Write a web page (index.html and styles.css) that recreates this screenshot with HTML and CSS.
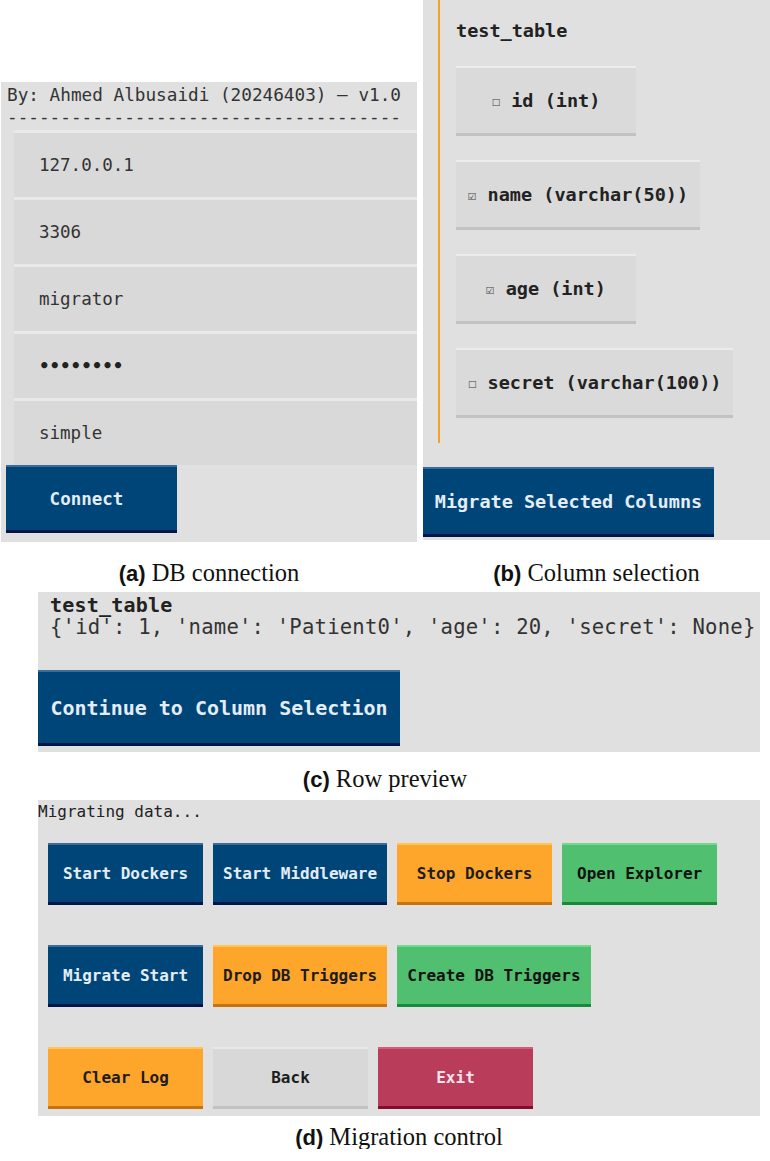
FILE: index.html
```html
<!DOCTYPE html>
<html>
<head>
    <title>DB Migrator</title>
    <meta charset="UTF-8">
    <meta name="viewport" content="width=device-width, initial-scale=1.0">
    <link rel="stylesheet" href="styles.css">
</head>
<body>
    <div class="row-top">
        <section class="panel panel-conn">
            <div class="byline">By: Ahmed Albusaidi (20246403) – v1.0</div>
            <div class="byline">-------------------------------------</div>
            <div class="fields">
                <div class="field">127.0.0.1</div>
                <div class="field">3306</div>
                <div class="field">migrator</div>
                <div class="field dots">••••••••</div>
                <div class="field">simple</div>
            </div>
            <button class="btn btn-blue btn-connect">Connect</button>
        </section>

        <section class="panel panel-cols">
            <div class="col-list">
                <div class="table-name">test_table</div>
                <button class="col-btn"><span class="box">☐</span> id (int)</button>
                <button class="col-btn"><span class="box">☑</span> name (varchar(50))</button>
                <button class="col-btn"><span class="box">☑</span> age (int)</button>
                <button class="col-btn"><span class="box">☐</span> secret (varchar(100))</button>
            </div>
            <button class="btn btn-blue btn-migrate">Migrate Selected Columns</button>
        </section>
    </div>

    <div class="row-captions">
        <div class="caption cap-a"><span class="tag">(a)</span> DB connection</div>
        <div class="caption cap-b"><span class="tag">(b)</span> Column selection</div>
    </div>

    <section class="panel panel-preview">
        <div class="preview-title">test_table</div>
        <div class="preview-row">{'id': 1, 'name': 'Patient0', 'age': 20, 'secret': None}</div>
        <button class="btn btn-blue btn-continue">Continue to Column Selection</button>
    </section>
    <div class="caption cap-wide cap-c"><span class="tag">(c)</span> Row preview</div>

    <section class="panel panel-control">
        <div class="log-line">Migrating data...</div>
        <div class="btn-row">
            <button class="btn btn-blue btn-ctl">Start Dockers</button>
            <button class="btn btn-blue btn-ctl">Start Middleware</button>
            <button class="btn btn-orange btn-ctl">Stop Dockers</button>
            <button class="btn btn-green btn-ctl">Open Explorer</button>
        </div>
        <div class="btn-row">
            <button class="btn btn-blue btn-ctl">Migrate Start</button>
            <button class="btn btn-orange btn-ctl">Drop DB Triggers</button>
            <button class="btn btn-green btn-ctl">Create DB Triggers</button>
        </div>
        <div class="btn-row">
            <button class="btn btn-orange btn-ctl">Clear Log</button>
            <button class="btn btn-grey btn-ctl">Back</button>
            <button class="btn btn-red btn-ctl">Exit</button>
        </div>
    </section>
    <div class="caption cap-wide cap-last"><span class="tag">(d)</span> Migration control</div>
</body>
</html>
```

FILE: styles.css
```css
body {
    margin: 0;
    background: #ffffff;
    font-family: "DejaVu Sans Mono", monospace;
    color: #333333;
}
.panel {
    background: #e0e0e0;
    box-sizing: border-box;
}
.row-top {
    display: flex;
    align-items: flex-start;
    height: 542px;
}

/* (a) connection */
.panel-conn {
    margin-top: 82px;
    margin-left: 1px;
    width: 416px;
    height: 460px;
    padding-top: 2px;
}
.byline {
    font-size: 17.7px;
    line-height: 22px;
    padding-left: 6px;
    white-space: pre;
}
.fields {
    margin-top: 2px;
    margin-left: 13px;
}
.field {
    box-sizing: border-box;
    height: 67px;
    border-top: 3px solid #e9e9e9;
    background: #d9d9d9;
    padding-left: 25px;
    font-size: 17.5px;
    line-height: 64px;
}
.field.dots {
    font-weight: bold;
    color: #222222;
}
.btn {
    display: flex;
    align-items: center;
    justify-content: center;
    box-sizing: border-box;
    border: none;
    font-family: "DejaVu Sans Mono", monospace;
    font-weight: bold;
    padding: 0;
    cursor: pointer;
}
.btn-blue {
    background: #004578;
    color: #e4edf6;
    border-top: 2px solid #3b6c9c;
    border-bottom: 3px solid #00164a;
}
.btn-orange {
    background: #fea52c;
    color: #1c1c1c;
    border-top: 2px solid #ffc451;
    border-bottom: 3px solid #c6720f;
}
.btn-green {
    background: #50bf70;
    color: #121212;
    border-top: 2px solid #70d98c;
    border-bottom: 3px solid #188a3b;
}
.btn-grey {
    background: #d8d8d8;
    color: #1c1c1c;
    border-top: 2px solid #e8e8e8;
    border-bottom: 3px solid #c2c2c2;
}
.btn-red {
    background: #b93c5a;
    color: #f6e4ec;
    border-top: 2px solid #d75c7a;
    border-bottom: 3px solid #8a0a2f;
}
.btn-connect {
    margin-left: 5px;
    width: 171px;
    height: 68px;
    padding-right: 10px;
    font-size: 17.5px;
}

/* (b) columns */
.panel-cols {
    margin-left: 6px;
    width: 347px;
    height: 540px;
}
.col-list {
    margin-left: 15px;
    height: 443px;
    border-left: 2px solid #f5a324;
    box-sizing: border-box;
    padding: 19px 0 0 16px;
    display: flex;
    flex-direction: column;
    align-items: flex-start;
    gap: 24px;
}
.table-name {
    font-size: 18.5px;
    font-weight: bold;
    line-height: 23px;
    color: #222222;
}
.col-btn {
    box-sizing: border-box;
    min-width: 180px;
    height: 70px;
    padding: 0 12px;
    border: none;
    border-top: 2px solid #ececec;
    border-bottom: 3px solid #c2c2c2;
    background: #dadada;
    font-family: "DejaVu Sans Mono", monospace;
    font-size: 18.5px;
    font-weight: bold;
    color: #222222;
    text-align: center;
}
.box {
    font-size: 14px;
    font-weight: normal;
    color: #444444;
    vertical-align: 1px;
}
.btn-migrate {
    margin-top: 24px;
    width: 291px;
    height: 70px;
    font-size: 18.5px;
}

/* captions */
.row-captions {
    display: flex;
}
.caption {
    height: 24px;
    font-family: "Liberation Serif", serif;
    font-size: 24.5px;
    line-height: 24px;
    color: #111111;
    text-align: center;
}
.tag {
    font-family: "Liberation Sans", sans-serif;
    font-weight: bold;
    font-size: 22px;
}
.cap-a {
    margin-top: 19px;
    width: 418px;
}
.cap-b {
    margin-top: 19px;
    margin-left: 5px;
    width: 347px;
}
.cap-wide {
    margin-left: 38px;
    width: 722px;
    margin-top: 15px;
}
.cap-c {
    box-sizing: border-box;
    padding-right: 28px;
}
.cap-last {
    margin-top: 9px;
}

/* (c) preview */
.panel-preview {
    margin-top: 7px;
    margin-left: 38px;
    width: 722px;
    height: 160px;
    padding-top: 2px;
}
.preview-title {
    padding-left: 12px;
    font-size: 20px;
    font-weight: bold;
    line-height: 22px;
    color: #222222;
    letter-spacing: 0.2px;
}
.preview-row {
    padding-left: 12px;
    font-size: 20.6px;
    line-height: 22px;
    letter-spacing: 0.2px;
    white-space: pre;
}
.btn-continue {
    margin-top: 32px;
    width: 362px;
    height: 76px;
    font-size: 20px;
}

/* (d) control */
.panel-control {
    margin-top: 9px;
    margin-left: 38px;
    width: 722px;
    height: 316px;
    padding: 2px 0 0 0;
}
.log-line {
    font-size: 16px;
    line-height: 20px;
    color: #222222;
}
.btn-row {
    display: flex;
    gap: 10px;
    padding-left: 10px;
    margin-top: 21px;
}
.btn-row + .btn-row {
    margin-top: 40px;
}
.btn-ctl {
    min-width: 155px;
    height: 62px;
    padding: 0 10px;
    font-size: 16px;
}
```
